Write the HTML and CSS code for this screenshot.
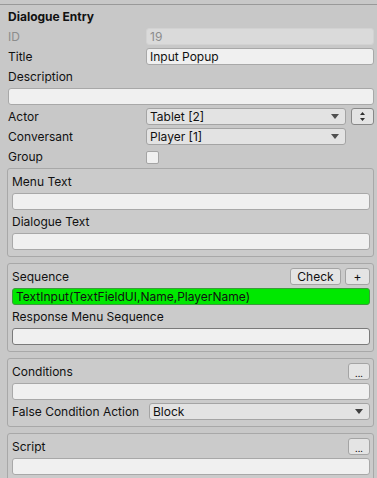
FILE: index.html
```html
<!DOCTYPE html>
<html lang="en">
<head>
  <meta charset="UTF-8" />
  <title>Dialogue Entry</title>
  <link rel="stylesheet" href="styles.css">
</head>
<body>
  <div class="inspector">
    <div class="row header">Dialogue Entry</div>
    <div class="row">
      <span class="label disabled">ID</span>
      <div class="field disabled-field">19</div>
    </div>
    <div class="row">
      <span class="label">Title</span>
      <div class="field">Input Popup</div>
    </div>
    <div class="row">
      <span class="label">Description</span>
    </div>
    <div class="row">
      <div class="field"></div>
    </div>
    <div class="row">
      <span class="label">Actor</span>
      <div class="dropdown">
        <span>Tablet [2]</span>
        <svg class="arrow" width="8" height="5" viewBox="0 0 8 5"><path d="M0 0H8L4 5Z" fill="#505050"/></svg>
      </div>
      <div class="btn spin">
        <svg width="7" height="9" viewBox="0 0 7 9"><path d="M3.5 0L6 3H1Z M1 6H6L3.5 9Z" fill="#303030"/></svg>
      </div>
    </div>
    <div class="row">
      <span class="label">Conversant</span>
      <div class="dropdown short">
        <span>Player [1]</span>
        <svg class="arrow" width="8" height="5" viewBox="0 0 8 5"><path d="M0 0H8L4 5Z" fill="#505050"/></svg>
      </div>
    </div>
    <div class="row">
      <span class="label">Group</span>
      <div class="checkbox"></div>
    </div>

    <div class="box">
      <div class="row"><span class="label">Menu Text</span></div>
      <div class="row"><div class="field"></div></div>
      <div class="row"><span class="label">Dialogue Text</span></div>
      <div class="row"><div class="field"></div></div>
    </div>

    <div class="box">
      <div class="row">
        <span class="label grow">Sequence</span>
        <div class="btn check">Check</div>
        <div class="btn plus">+</div>
      </div>
      <div class="row"><div class="field green">TextInput(TextFieldUI,Name,PlayerName)</div></div>
      <div class="row"><span class="label">Response Menu Sequence</span></div>
      <div class="row"><div class="field dark"></div></div>
    </div>

    <div class="box">
      <div class="row">
        <span class="label grow">Conditions</span>
        <div class="btn dots">...</div>
      </div>
      <div class="row"><div class="field"></div></div>
      <div class="row">
        <span class="label inner">False Condition Action</span>
        <div class="dropdown">
          <span>Block</span>
          <svg class="arrow" width="8" height="5" viewBox="0 0 8 5"><path d="M0 0H8L4 5Z" fill="#404040"/></svg>
        </div>
      </div>
    </div>

    <div class="box">
      <div class="row">
        <span class="label grow">Script</span>
        <div class="btn dots">...</div>
      </div>
      <div class="row"><div class="field"></div></div>
    </div>
  </div>
</body>
</html>
```

FILE: styles.css
```css
* {
    margin: 0;
    padding: 0;
    box-sizing: border-box;
}
body {
    background: #c8c8c8;
    font-family: Inter, "Noto Sans", sans-serif;
    font-size: 12px;
    color: #111;
    overflow: hidden;
}
.inspector {
    margin-top: 4px;
    border-top: 1px solid #999;
    padding: 3px 3px 0 8px;
}
.row {
    display: flex;
    align-items: center;
    height: 17px;
    margin-bottom: 3px;
}
.header {
    font-weight: bold;
}
.label {
    width: 138px;
    flex-shrink: 0;
    white-space: nowrap;
}
.label.inner {
    width: 137px;
}
.label.grow {
    flex: 1;
}
.disabled {
    color: #8c8c8c;
}
.field {
    flex: 1;
    height: 17px;
    background: #f0f0f0;
    border: 1px solid #a8a8a8;
    border-radius: 3px;
    padding: 0 3px;
    line-height: 15px;
    white-space: nowrap;
    overflow: hidden;
}
.field.disabled-field {
    background: #dadada;
    border-color: #d2d2d2;
    color: #8c8c8c;
}
.field.green {
    background: #00e800;
    border-color: #3c9a3c;
}
.field.dark {
    border-color: #7a7a7a;
}
.dropdown {
    flex: 1;
    height: 17px;
    display: flex;
    align-items: center;
    justify-content: space-between;
    background: #e3e3e3;
    border: 1px solid #a4a4a4;
    border-radius: 3px;
    padding: 0 6px 0 3px;
}
.dropdown.short {
    margin-right: 28px;
}
.btn {
    height: 17px;
    display: flex;
    align-items: center;
    justify-content: center;
    background: #e4e4e4;
    border: 1px solid #a4a4a4;
    border-radius: 3px;
    flex-shrink: 0;
}
.spin {
    width: 23px;
    margin-left: 5px;
    border-color: #888;
}
.check {
    width: 51px;
    font-size: 12px;
}
.plus {
    width: 25px;
    margin-left: 4px;
}
.dots {
    width: 22px;
    font-size: 9px;
    line-height: 1;
    padding-top: 3px;
}
.checkbox {
    width: 13px;
    height: 13px;
    background: #f0f0f0;
    border: 1px solid #a4a4a4;
    border-radius: 2px;
    margin-top: 2px;
}
.box {
    border: 1px solid #a8a8a8;
    border-radius: 3px;
    background: #cbcbcb;
    padding: 4px 3px 6px 4px;
    margin: 0 0 6px -1px;
}
.box .row:last-child {
    margin-bottom: 0;
}
```
